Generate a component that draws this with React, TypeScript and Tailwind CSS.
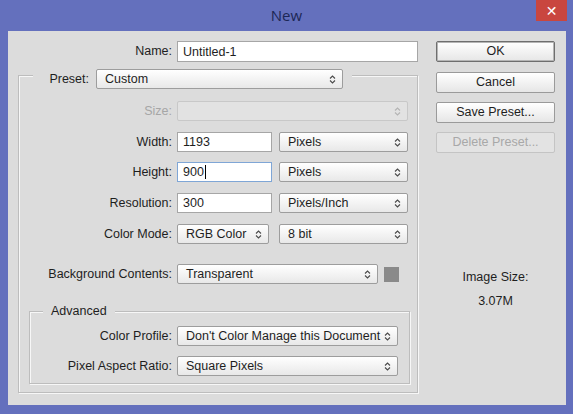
import React from "react";

const font = { fontFamily: '"Liberation Sans", Arial, sans-serif' };

function Arrows({ dim }: { dim?: boolean }) {
  return (
    <svg width="7" height="9" viewBox="0 0 7 9" className="shrink-0">
      <path d="M1 3.5 L3.5 1 L6 3.5" fill="none" stroke={dim ? "#b4b4b4" : "#4a4a4a"} strokeWidth="1.1" />
      <path d="M1 5.5 L3.5 8 L6 5.5" fill="none" stroke={dim ? "#b4b4b4" : "#4a4a4a"} strokeWidth="1.1" />
    </svg>
  );
}

function Select({ value, className, disabled }: { value: string; className: string; disabled?: boolean }) {
  return (
    <div
      className={`flex h-[20px] items-center justify-between rounded-[2px] border pl-[8px] pr-[6px] ${
        disabled
          ? "border-[#c8c8c8] bg-[#e2e2e2]"
          : "border-[#9d9d9d] bg-gradient-to-b from-white to-[#e8e8e8] text-[#1e1e1e]"
      } ${className}`}
    >
      <span className="whitespace-nowrap leading-[18px]">{value}</span>
      <Arrows dim={disabled} />
    </div>
  );
}

function Input({ value, className, focused }: { value: string; className: string; focused?: boolean }) {
  return (
    <div
      className={`flex h-[20px] items-center border bg-white pl-[5px] text-[#1e1e1e] ${
        focused ? "border-[#7fa6d6]" : "border-[#a6a6a6]"
      } ${className}`}
    >
      <span className="leading-[18px]">{value}</span>
      {focused && <span className="ml-[1px] h-[14px] w-px bg-black" />}
    </div>
  );
}

function Row({
  label,
  labelW,
  disabled,
  children,
  className = "",
}: {
  label: string;
  labelW: string;
  disabled?: boolean;
  children: React.ReactNode;
  className?: string;
}) {
  return (
    <div className={`flex items-center ${className}`}>
      <div className={`${labelW} whitespace-nowrap text-right ${disabled ? "text-[#a6a6a6]" : "text-[#1e1e1e]"}`}>{label}</div>
      <div className="ml-[5px] flex items-center">{children}</div>
    </div>
  );
}

function Button({ label, primary, disabled }: { label: string; primary?: boolean; disabled?: boolean }) {
  return (
    <div
      className={`flex h-[21px] w-[119px] items-center justify-center rounded-[2px] border ${
        disabled
          ? "border-[#c4c4c4] bg-[#e3e3e3] text-[#a8a8a8]"
          : primary
          ? "border-[#6e6e6e] bg-gradient-to-b from-white to-[#e6e6e6] text-[#1e1e1e] shadow-[inset_0_0_0_1px_#b5b5b5]"
          : "border-[#9a9a9a] bg-gradient-to-b from-white to-[#e6e6e6] text-[#1e1e1e]"
      }`}
    >
      {label}
    </div>
  );
}

const groupBorder = "border border-[#bdbdbd] shadow-[inset_1px_1px_0_#f7f7f7,1px_1px_0_#f7f7f7]";

export default function App() {
  return (
    <div className="relative h-[414px] w-[573px] bg-[#6470bd] text-[12.5px]" style={font}>
      <div className="flex h-[31px] items-center justify-center">
        <span className="text-[15px] text-[#1c2756]" style={{ fontFamily: '"Open Sans", sans-serif' }}>
          New
        </span>
      </div>
      <div className="absolute right-[6px] top-0 flex h-[21px] w-[31px] items-center justify-center bg-[#c9463f] text-[14px] leading-none text-white" style={{ fontFamily: '"DejaVu Sans", sans-serif' }}>
        ✕
      </div>

      <div className="ml-[8px] mr-[7px] flex h-[374px] bg-[#dcdcdc] pt-[10px]">
        {/* left column */}
        <div className="w-[410px]">
          <Row label="Name:" labelW="w-[164px]">
            <Input value="Untitled-1" className="h-[21px] w-[241px]" />
          </Row>

          <div className={`ml-[10px] mt-[13px] w-[400px] pb-[8px] ${groupBorder}`}>
            <div className="ml-[14px] -mt-[7px] flex w-[319px] items-center bg-[#dcdcdc]">
              <span className="w-[56px] whitespace-nowrap text-right text-[#1e1e1e]">Preset:</span>
              <Select value="Custom" className="ml-[7px] w-[247px]" />
            </div>

            <Row label="Size:" labelW="w-[153px]" disabled className="mt-[12px]">
              <Select value="" disabled className="w-[231px]" />
            </Row>
            <Row label="Width:" labelW="w-[153px]" className="mt-[11px]">
              <Input value="1193" className="w-[95px]" />
              <Select value="Pixels" className="ml-[7px] w-[129px]" />
            </Row>
            <Row label="Height:" labelW="w-[153px]" className="mt-[10px]">
              <Input value="900" focused className="w-[95px]" />
              <Select value="Pixels" className="ml-[7px] w-[129px]" />
            </Row>
            <Row label="Resolution:" labelW="w-[153px]" className="mt-[11px]">
              <Input value="300" className="w-[95px]" />
              <Select value="Pixels/Inch" className="ml-[7px] w-[129px]" />
            </Row>
            <Row label="Color Mode:" labelW="w-[153px]" className="mt-[11px]">
              <Select value="RGB Color" className="w-[92px]" />
              <Select value="8 bit" className="ml-[10px] w-[129px]" />
            </Row>
            <Row label="Background Contents:" labelW="w-[153px]" className="mt-[20px]">
              <Select value="Transparent" className="w-[201px]" />
              <div className="ml-[6px] h-[15px] w-[15px] bg-[#8a8a8a]" />
            </Row>

            <div className={`ml-[10px] mr-[7px] mt-[27px] pb-[7px] ${groupBorder}`}>
              <div className="ml-[13px] -mt-[9px] h-[16px] w-fit bg-[#dcdcdc] px-[8px] leading-[16px] text-[#1e1e1e]">
                Advanced
              </div>
              <Row label="Color Profile:" labelW="w-[142px]" className="mt-[7px]">
                <Select value="Don't Color Manage this Document" className="w-[221px]" />
              </Row>
              <Row label="Pixel Aspect Ratio:" labelW="w-[142px]" className="mt-[10px]">
                <Select value="Square Pixels" className="w-[221px]" />
              </Row>
            </div>
          </div>
        </div>

        {/* right column */}
        <div className="ml-[18px] flex w-[119px] flex-col">
          <Button label="OK" primary />
          <div className="mt-[10px]">
            <Button label="Cancel" />
          </div>
          <div className="mt-[9px]">
            <Button label="Save Preset..." />
          </div>
          <div className="mt-[9px]">
            <Button label="Delete Preset..." disabled />
          </div>
          <div className="mt-[117px] text-center leading-[14px] text-[#1e1e1e]">Image Size:</div>
          <div className="mt-[10px] text-center leading-[14px] text-[#1e1e1e]">3.07M</div>
        </div>
      </div>
    </div>
  );
}
